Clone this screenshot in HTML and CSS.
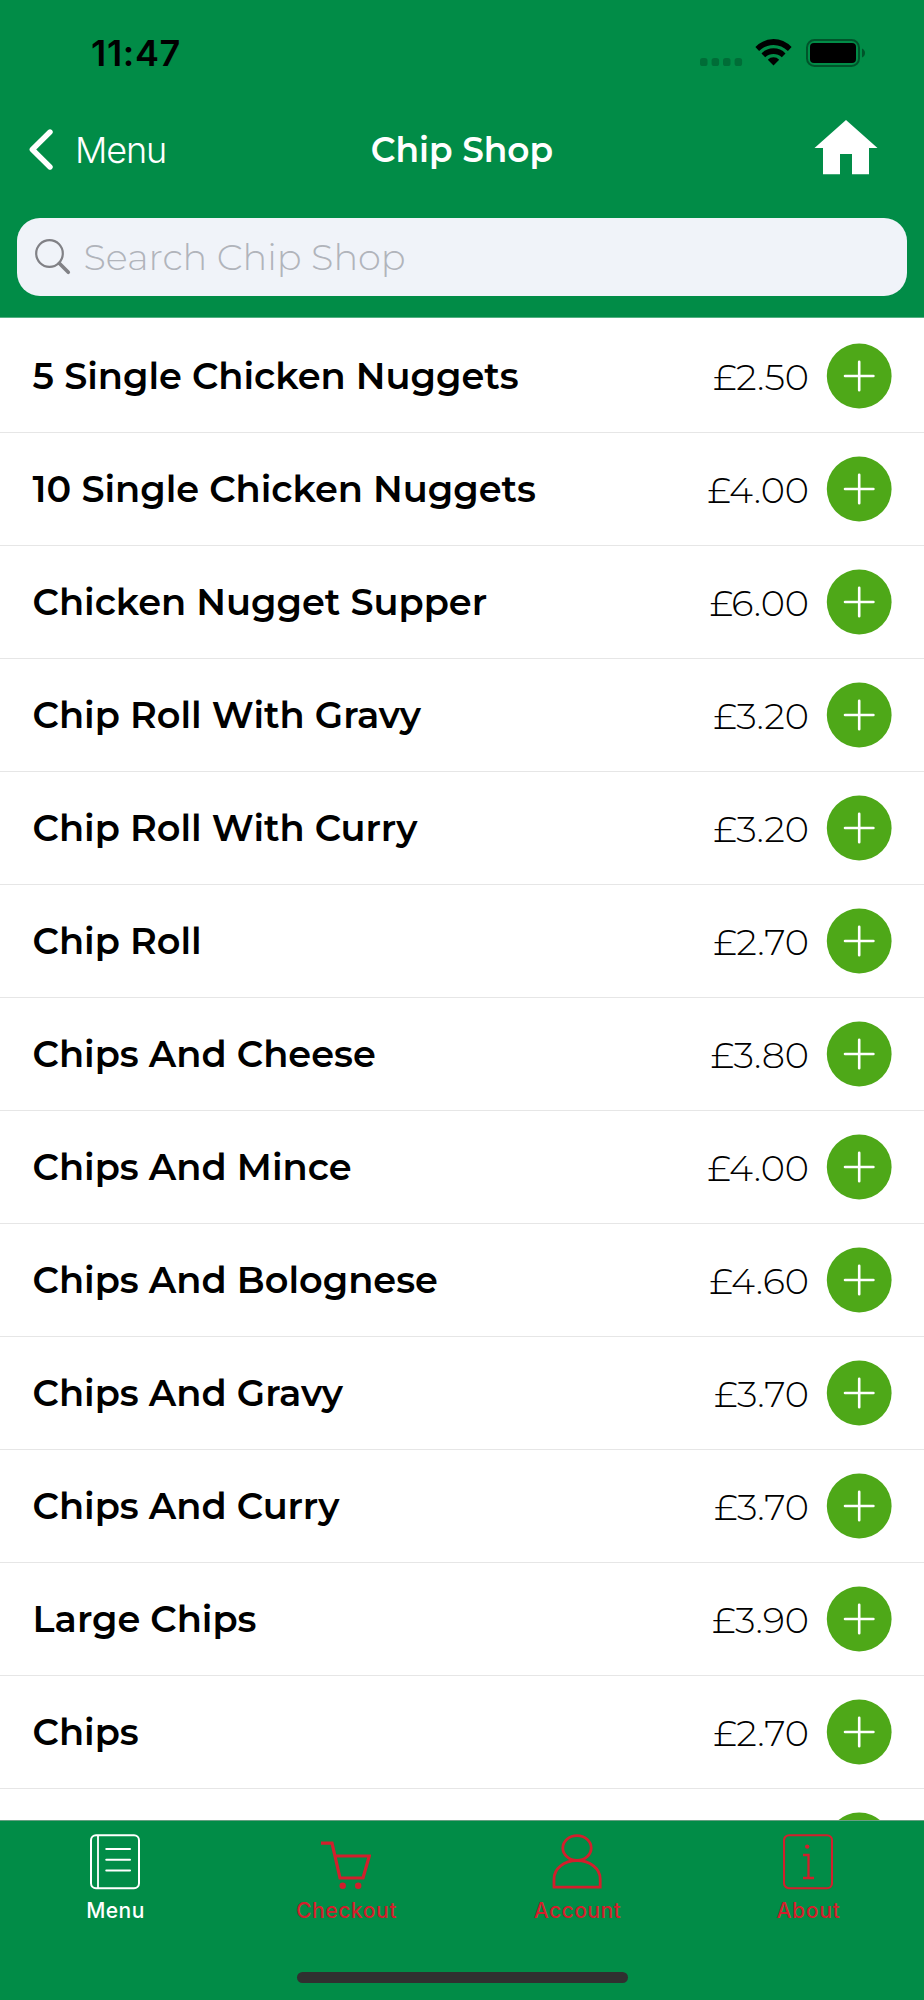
FILE: index.html
```html
<!DOCTYPE html>
<html lang="en">
<head>
<meta charset="utf-8">
<title>Chip Shop</title>
<link rel="stylesheet" href="styles.css">
</head>
<body>
<div class="app">
  <header class="header">
    <div class="status">
      <span class="time"><span data-fit="90">11:47</span></span>
      <div class="status-icons">
        <svg class="signal" width="43" height="8" viewBox="0 0 43 8"><rect width="7.5" height="8" rx="2.6"/><rect x="11.6" width="7.5" height="8" rx="2.6"/><rect x="23" width="7.5" height="8" rx="2.6"/><rect x="34.6" width="7.5" height="8" rx="2.6"/></svg>
        <svg class="wifi" width="37" height="27" viewBox="0 0 37 27"><path d="M.4 8.1Q8.3.1 18.5.1T36.6 8.1L32.9 12Q26.800 5.900 18.500 5.900T4.100 12ZM6.500 14.400Q11.500 9.300 18.500 9.300T30.500 14.400L26.800 18.200Q23.200 14.900 18.500 14.900T10.200 18.200ZM12.800 20.700Q15.200 18.300 18.500 18.300T24.200 20.700L18.500 26.500Z"/></svg>
        <svg class="battery" width="60" height="28" viewBox="0 0 60 28"><rect x="1" y="1" width="52" height="26" rx="7.500" fill="none" stroke="#000" stroke-opacity=".4" stroke-width="2"/><rect x="4" y="4" width="46" height="20" rx="4"/><path d="M56 9.500Q59 11 59 14T56 18.500Z" fill-opacity=".4"/></svg>
      </div>
    </div>
    <nav class="nav">
      <div class="back">
        <svg width="24" height="42" viewBox="0 0 24 42"><path d="M21 3 3.300 20.500 21 38" fill="none" stroke="#fff" stroke-width="5.400" stroke-linecap="round" stroke-linejoin="round"/></svg>
        <span data-fit="91">Menu</span>
      </div>
      <h1 class="title">Chip Shop</h1>
      <svg class="home" width="64" height="56" viewBox="0 0 64 56"><path d="M32 1 63.500 29H55V55.300H38V35H26V55.300H9V29H.500Z" fill="#fff"/></svg>
    </nav>
    <div class="search">
      <svg width="36" height="36" viewBox="0 0 36 36"><circle cx="14.500" cy="14.500" r="13.300" fill="none" stroke="#818186" stroke-width="2.200"/><path d="m24.300 24.300 9 9" stroke="#818186" stroke-width="3.600" stroke-linecap="round"/></svg>
      <span class="placeholder">Search Chip Shop</span>
    </div>
  </header>
  <main class="list" id="list"></main>
  <footer class="tabs">
    <div class="tab-row">
      <div class="tab active">
        <svg width="50" height="56" viewBox="0 0 50 56"><rect x="1" y="1.200" width="48" height="53" rx="5" stroke-width="2"/><path d="M8 1.500V54" stroke-width="1.800"/><path d="M16.300 15H40M16.300 25.700H40M16.300 36.500H40" stroke-width="2.100" stroke-linecap="round"/></svg>
        <span data-fit="58.500">Menu</span>
      </div>
      <div class="tab">
        <svg width="50" height="56" viewBox="0 0 50 56"><path d="M0 9.200H11L19 44H42L48.300 22H14" stroke-width="3.200"/><circle class="solid" cx="21.700" cy="51.700" r="3.200"/><circle class="solid" cx="37.200" cy="51.700" r="3.200"/></svg>
        <span data-fit="101">Checkout</span>
      </div>
      <div class="tab">
        <svg width="50" height="56" viewBox="0 0 50 56"><ellipse cx="25" cy="14" rx="14.200" ry="12.400" stroke-width="2.800"/><path d="M2 53.200V45C2 34.500 12 26.500 25 26.500S48.200 34.500 48.200 45V53.200Z" stroke-width="2.800"/></svg>
        <span data-fit="87.500">Account</span>
      </div>
      <div class="tab">
        <svg width="50" height="56" viewBox="0 0 50 56"><rect x="1" y="1.200" width="48" height="53" rx="5" stroke-width="2.100"/><circle class="solid" cx="24.200" cy="12.600" r="2.200"/><path d="M20 21H25.500V44M20 44H31" stroke-width="2.300"/></svg>
        <span data-fit="64">About</span>
      </div>
    </div>
    <div class="indicator"></div>
  </footer>
</div>
<script src="app.js"></script>
</body>
</html>
```

FILE: styles.css
```css
* { box-sizing: border-box; }
body { margin: 0; background: #fff; font-family: Montserrat, Inter, sans-serif; }
.app { width: 924px; height: 2000px; display: flex; flex-direction: column; overflow: hidden; }
[data-fit] { white-space: pre; }

.header { flex: none; height: 318px; background: #018c47; border-bottom: 1px solid #53b082; }
.status { height: 106px; padding: 0 58px 0 91px; display: flex; align-items: center; justify-content: space-between; }
.time { font: 600 36px/40px Inter, sans-serif; color: #000; }
.status-icons { display: flex; align-items: center; padding-bottom: 1px; }
.signal { fill: #000; fill-opacity: .22; margin: 19px 12px 0 0; }
.wifi { margin-right: 14px; }

.nav { height: 88px; padding: 0 29px; display: grid; grid-template-columns: 1fr auto 1fr; align-items: center; color: #fff; }
.back { display: flex; align-items: center; gap: 22px; font: 350 36px/40px Inter, sans-serif; }
.back svg { margin-top: -1px; }
.title { margin: 0; font-size: 34.4px; line-height: 40px; font-weight: 600; }
.home { justify-self: end; margin: -6px 17px 0 0; }

.search { margin: 24px 17px 0; height: 78px; padding: 0 18px; display: flex; align-items: center; gap: 12.5px; background: #f0f3f9; border-radius: 23px; }
.placeholder { font-size: 36.7px; font-weight: 300; line-height: 40px; color: #b1b4bb; }

.list { flex: 1; min-height: 0; overflow: hidden; padding-top: 2px; }
.item { height: 113px; padding: 0 32px 0 32.6px; border-bottom: 1px solid #e6e6e6; display: flex; align-items: center; color: #000; }
.name { flex: 1; font-size: 36.7px; line-height: 40px; font-weight: 600; }
.price { font-size: 36.7px; line-height: 40px; font-weight: 300; margin-right: 18px; padding-top: 1px; }
.add { display: block; overflow: visible; }

.tabs { flex: none; height: 180px; background: #018c47; border-top: 1px solid #669f82; display: flex; flex-direction: column; align-items: center; }
.tab-row { width: 100%; height: 151px; padding-top: 13px; display: grid; grid-template-columns: repeat(4, 1fr); }
.tab { display: flex; flex-direction: column; align-items: center; gap: 9px; color: #d21f2c; font: 500 21px/24px Inter, sans-serif; }
.tab svg { fill: none; stroke: currentColor; margin-right: 1px; }
.tab .solid { fill: currentColor; stroke: none; }
.tab.active { color: #fff; }
.indicator { width: 331px; height: 11px; border-radius: 6px; background: #303030; }
```

FILE: app.js
```js
const items = [
  ["5 Single Chicken Nuggets", "£2.50"],
  ["10 Single Chicken Nuggets", "£4.00"],
  ["Chicken Nugget Supper", "£6.00"],
  ["Chip Roll With Gravy", "£3.20"],
  ["Chip Roll With Curry", "£3.20"],
  ["Chip Roll", "£2.70"],
  ["Chips And Cheese", "£3.80"],
  ["Chips And Mince", "£4.00"],
  ["Chips And Bolognese", "£4.60"],
  ["Chips And Gravy", "£3.70"],
  ["Chips And Curry", "£3.70"],
  ["Large Chips", "£3.90"],
  ["Chips", "£2.70"],
  ["", ""]
];
const plus = '<svg class="add" width="65" height="64" viewBox="0 0 65 64"><circle cx="32.200" cy="32" r="32.400" fill="#4ea818"/><path d="M18 32H46.400M32.200 17.800V46.200" stroke="#fff" stroke-width="2.600" stroke-linecap="round"/></svg>';
document.getElementById("list").innerHTML = items.map(([name, price]) =>
  `<div class="item"><span class="name">${name}</span><span class="price">${price}</span>${plus}</div>`
).join("");

// Adjust tracking so each label fills its assigned width.
document.querySelectorAll("[data-fit]").forEach(el => {
  const width = el.getBoundingClientRect().width;
  const spacing = (parseFloat(el.dataset.fit) - width) / el.textContent.length;
  el.style.letterSpacing = spacing.toFixed(3) + "px";
});
```
